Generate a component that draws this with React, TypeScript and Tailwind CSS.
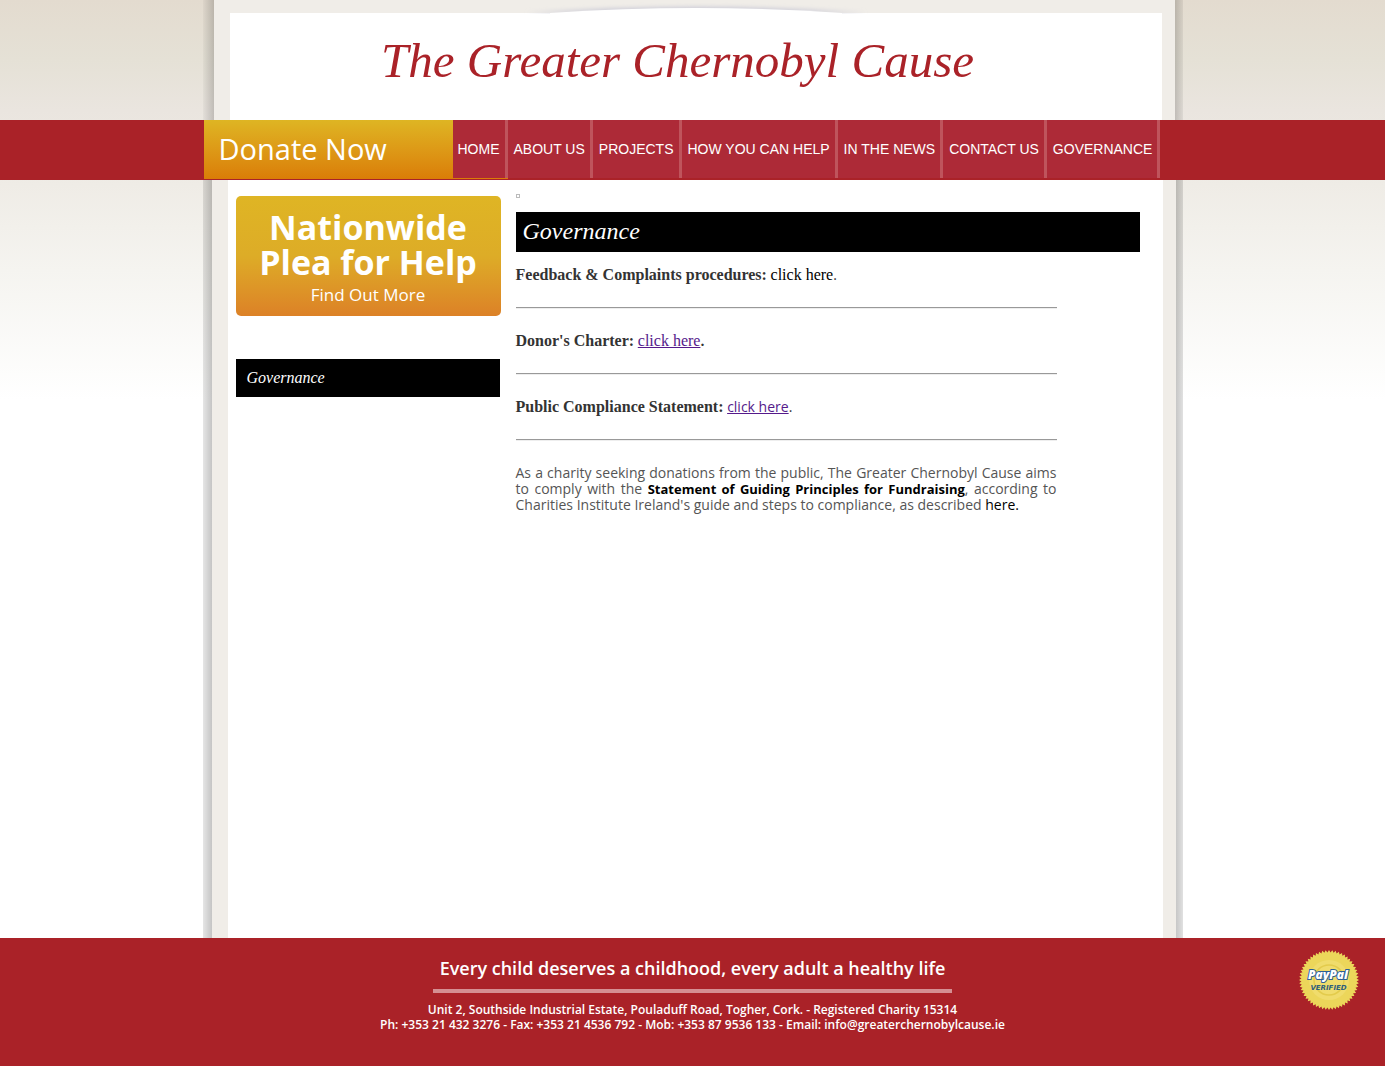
import type { ReactNode } from "react";

const NAV_ITEMS = [
  "HOME",
  "ABOUT US",
  "PROJECTS",
  "HOW YOU CAN HELP",
  "IN THE NEWS",
  "CONTACT US",
  "GOVERNANCE",
];

const SEAL_TEETH = 56;

function sealOutline() {
  const points: string[] = [];
  for (let i = 0; i < SEAL_TEETH * 2; i++) {
    const radius = i % 2 === 0 ? 30 : 27.6;
    const angle = (i * Math.PI) / SEAL_TEETH;
    points.push(
      `${(30 + radius * Math.cos(angle)).toFixed(2)},${(30 + radius * Math.sin(angle)).toFixed(2)}`,
    );
  }
  return points.join(" ");
}

function PayPalSeal() {
  return (
    <svg viewBox="0 0 60 60" className="size-[60px]" role="img" aria-label="PayPal Verified">
      <polygon points={sealOutline()} fill="#ecd65a" />
      <circle cx="30" cy="30" r="20" fill="#f0dc6c" />
      <circle cx="30" cy="30" r="15" fill="none" stroke="#e3cb4c" strokeWidth="1.5" />
      <text
        x="29"
        y="29"
        textAnchor="middle"
        fontFamily="'Open Sans', sans-serif"
        fontWeight="800"
        fontStyle="italic"
        fontSize="12"
        fill="#ffffff"
        stroke="#2d5f95"
        strokeWidth="2"
        paintOrder="stroke"
      >
        PayPal
      </text>
      <text
        x="29.5"
        y="39.5"
        textAnchor="middle"
        fontFamily="'DejaVu Sans', sans-serif"
        fontWeight="700"
        fontStyle="italic"
        fontSize="7"
        fill="#2f5f7c"
      >
        VERIFIED
      </text>
    </svg>
  );
}

function HeaderArc() {
  return (
    <svg
      viewBox="0 0 360 14"
      className="absolute left-1/2 top-0 h-[14px] w-[360px] -translate-x-1/2"
      aria-hidden="true"
    >
      <defs>
        <filter id="arcShadow" x="-10%" y="-100%" width="120%" height="300%">
          <feGaussianBlur stdDeviation="2" />
        </filter>
      </defs>
      <path d="M10 13 Q180 1 350 13 Z" fill="#c9c9d6" filter="url(#arcShadow)" />
      <path d="M34 13 Q180 3 326 13 L326 14 L34 14 Z" fill="#ffffff" />
    </svg>
  );
}

function Row({ children }: { children: ReactNode }) {
  return (
    <>
      <p className="h-4 leading-4">{children}</p>
      <hr className="my-6 h-[2px] border-t border-b border-t-[#999] border-b-[#eee]" />
    </>
  );
}

export default function App() {
  return (
    <div className="flex min-h-screen flex-col bg-white bg-[linear-gradient(to_bottom,#e3dbcf_0px,#e5e1d6_60px,#eae5df_110px,#efece6_185px,#f5f4f0_270px,#ffffff_400px)] font-['Trebuchet_MS','Open_Sans',sans-serif]">
      <header className="mx-auto flex h-[120px] w-full max-w-[980px]">
        <div className="w-[11px] bg-linear-to-r from-black/3 to-black/18" />
        <div className="relative flex-1 border-t-[13px] border-r-[13px] border-l-[16px] border-[#f0ede8] bg-white">
          <div className="absolute inset-x-0 -top-[13px]">
            <HeaderArc />
          </div>
          <h1 className="pt-4 pr-9 text-center font-['Liberation_Serif',serif] text-[49px] leading-[64px] text-[#aa2228] italic">
            The Greater Chernobyl Cause
          </h1>
        </div>
        <div className="w-[8px] bg-linear-to-r from-black/18 to-black/6" />
      </header>

      <nav className="h-[60px] bg-[#aa2228]">
        <div className="mx-auto flex w-full max-w-[980px]">
          <a
            href="#donate"
            className="ml-px h-[59px] w-[249px] bg-linear-to-b from-[#deb523] to-[#da7d07] pl-[15px] text-[29px] leading-[58px] text-white"
          >
            Donate Now
          </a>
          <ul className="flex font-['Liberation_Sans',sans-serif] text-sm">
            {NAV_ITEMS.map((item, i) => (
              <li
                key={item}
                className={i === 0 ? "h-[59px] border-b border-[#da7d07]" : "h-[58px] bg-[#ad2a37] pl-px"}
              >
                <a
                  href="#"
                  className="block h-[58px] border-r-[3px] border-[#bf545c] bg-[#ad2a37] px-[5px] leading-[58px] whitespace-nowrap text-white"
                >
                  {item}
                </a>
              </li>
            ))}
          </ul>
        </div>
      </nav>

      <div className="mx-auto flex w-full max-w-[980px] flex-1">
        <div className="w-[9px] bg-linear-to-r from-black/10 to-black/23" />
        <main className="flex flex-1 border-r-[13px] border-l-[16px] border-[#f0ede8] bg-white pt-4 pr-[23px] pl-2">
          <aside className="w-[265px]">
            <a
              href="#plea"
              className="block h-[120px] rounded-[5px] bg-linear-to-b from-[#dfb524] via-[#ddac27] to-[#dc8127] pt-[14px] text-center text-white"
            >
              <span className="block text-[34px] leading-[35px] font-bold">
                Nationwide
                <br />
                Plea for Help
              </span>
              <span className="block text-[17px] leading-[30px] font-medium">Find Out More</span>
            </a>
            <h2 className="mt-[43px] mr-px h-[38px] bg-black pl-[11px] font-['Liberation_Serif',serif] text-[16px] leading-[37px] text-white italic">
              Governance
            </h2>
          </aside>
          <section className="ml-[15px] flex-1">
            <div className="-mt-[2px] size-1 border border-[#bbb]" />
            <h2 className="mt-[14px] h-10 bg-black pl-[7px] font-['Liberation_Serif',serif] text-[24px] leading-[38px] text-white italic">
              Governance
            </h2>
            <div className="mt-[15px] max-w-[541px] text-[14px] text-[#333]">
              <Row>
                <b className="font-['Liberation_Serif',serif] text-[16px]">
                  Feedback &amp; Complaints procedures:
                </b>{" "}
                <a href="#" className="font-['Liberation_Serif',serif] text-[16px] text-black">
                  click here
                </a>
                .
              </Row>
              <Row>
                <b className="font-['Liberation_Serif',serif] text-[16px]">Donor's Charter:</b>{" "}
                <a href="#" className="font-['Liberation_Serif',serif] text-[16px] text-[#551a8b] underline">
                  click here
                </a>
                <b>.</b>
              </Row>
              <Row>
                <b className="font-['Liberation_Serif',serif] text-[16px]">
                  Public Compliance Statement:
                </b>{" "}
                <a href="#" className="text-[#551a8b] underline">
                  click here
                </a>
                .
              </Row>
              <p className="text-justify leading-4 text-[#555]">
                As a charity seeking donations from the public, The Greater Chernobyl Cause aims to
                comply with the{" "}
                <a href="#" className="text-[13px] font-bold text-black">
                  Statement of Guiding Principles for Fundraising
                </a>
                , according to Charities Institute Ireland's guide and steps to compliance, as
                described{" "}
                <a href="#" className="text-black">
                  here.
                </a>
              </p>
            </div>
          </section>
        </main>
        <div className="w-[7px] bg-linear-to-r from-black/22 to-black/12" />
      </div>

      <footer className="relative h-[128px] bg-[#aa2228] text-center font-semibold text-white">
        <p className="mx-auto w-[519px] border-b-4 border-[#d58f92] pt-4 pb-[7px] text-[18px] leading-7">
          Every child deserves a childhood, every adult a healthy life
        </p>
        <address className="pt-[9px] text-[12px] leading-[15px] not-italic">
          Unit 2, Southside Industrial Estate, Pouladuff Road, Togher, Cork. - Registered Charity
          15314
          <br />
          Ph: +353 21 432 3276 - Fax: +353 21 4536 792 - Mob: +353 87 9536 133 - Email:
          info@greaterchernobylcause.ie
        </address>
        <a href="#paypal" className="absolute top-3 right-[26px]">
          <PayPalSeal />
        </a>
      </footer>
    </div>
  );
}
